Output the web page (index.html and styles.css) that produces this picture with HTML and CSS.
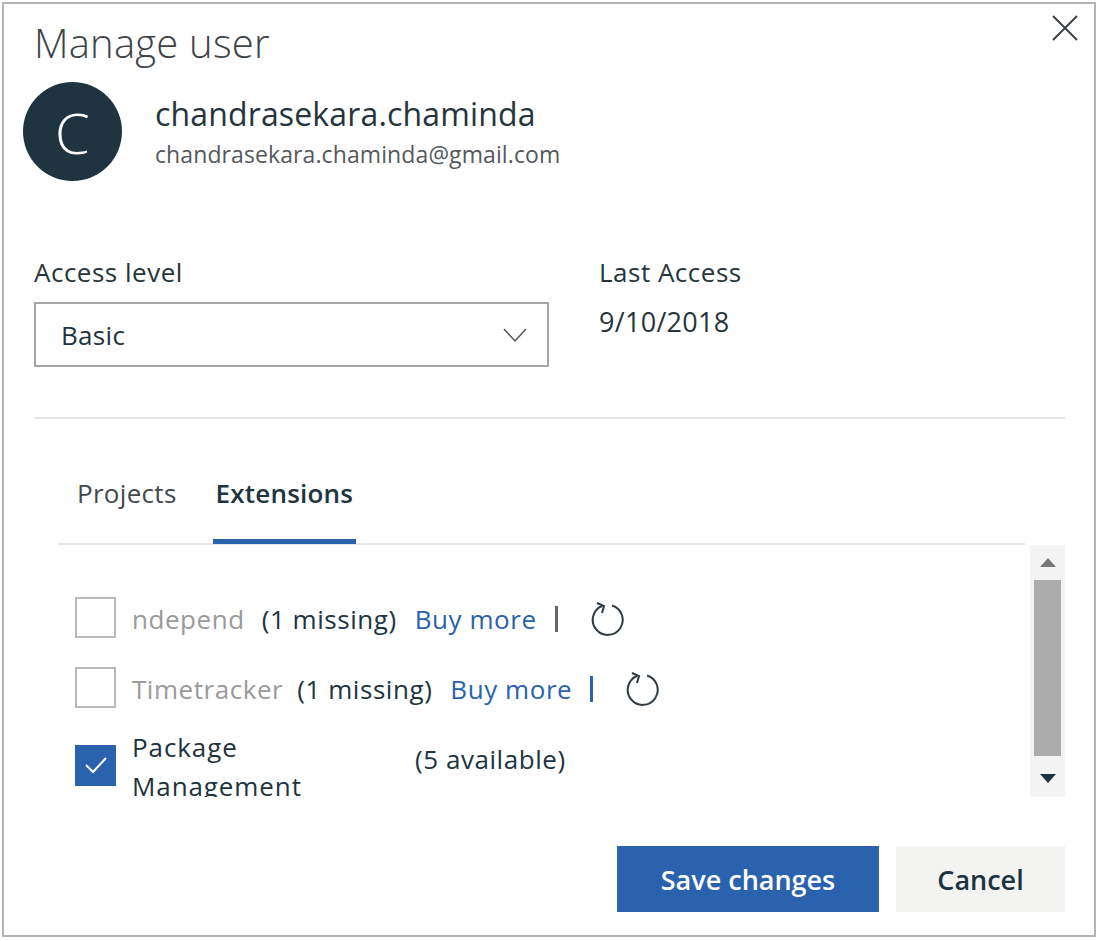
FILE: index.html
```html
<!DOCTYPE html>
<html lang="en">
<head>
  <meta charset="UTF-8" />
  <meta name="viewport" content="width=device-width, initial-scale=1" />
  <title>Manage user</title>
  <link rel="stylesheet" href="styles.css">
</head>
<body>
<div class="dialog">
  <button class="close-btn" aria-label="Close">
    <svg width="28" height="28" viewBox="0 0 28 28"><path d="M2 2 L26 26 M26 2 L2 26" stroke="#3c4348" stroke-width="2" fill="none"/></svg>
  </button>

  <h1 class="title">Manage user</h1>

  <div class="user">
    <div class="avatar">C</div>
    <div class="user-info">
      <div class="user-name">chandrasekara.chaminda</div>
      <div class="user-email">chandrasekara.chaminda@gmail.com</div>
    </div>
  </div>

  <div class="access">
    <div class="access-level">
      <label class="field-label">Access level</label>
      <div class="select">
        <span>Basic</span>
        <svg width="26" height="16" viewBox="0 0 26 16"><path d="M2 2 L13 14 L24 2" stroke="#555" stroke-width="1.5" fill="none"/></svg>
      </div>
    </div>
    <div class="last-access">
      <div class="field-label">Last Access</div>
      <div class="last-date">9/10/2018</div>
    </div>
  </div>

  <hr class="divider">

  <div class="tabs-area">
    <ul class="tabs">
      <li class="tab">Projects</li>
      <li class="tab active">Extensions</li>
    </ul>
  </div>

  <div class="list-wrap">
    <div class="list">
      <div class="row row-1">
        <span class="check"></span>
        <span class="ext-name muted">ndepend</span>
        <span class="count">(1 missing)</span>
        <a class="buy" href="#">Buy more</a>
        <span class="sep sep-gray"></span>
        <svg class="refresh" width="36" height="36" viewBox="0 0 36 36"><path d="M13 5 A15 15 0 1 0 23 4.5" stroke="#2f3b42" stroke-width="2" fill="none"/><path d="M8 2 L15 5 L13 12" stroke="#2f3b42" stroke-width="2" fill="none"/></svg>
      </div>
      <div class="row row-2">
        <span class="check"></span>
        <span class="ext-name muted">Timetracker</span>
        <span class="count">(1 missing)</span>
        <a class="buy" href="#">Buy more</a>
        <span class="sep"></span>
        <svg class="refresh" width="36" height="36" viewBox="0 0 36 36"><path d="M13 5 A15 15 0 1 0 23 4.5" stroke="#2f3b42" stroke-width="2" fill="none"/><path d="M8 2 L15 5 L13 12" stroke="#2f3b42" stroke-width="2" fill="none"/></svg>
      </div>
      <div class="row row-3">
        <span class="check checked">
          <svg width="24" height="20" viewBox="0 0 24 20"><path d="M2 10 L9 17 L22 3" stroke="#fff" stroke-width="2" fill="none"/></svg>
        </span>
        <span class="ext-name wrap">Package Management</span>
        <span class="count count-up">(5 available)</span>
      </div>
    </div>
    <div class="scrollbar">
      <span class="arrow arrow-up"></span>
      <span class="thumb"></span>
      <span class="arrow arrow-down"></span>
    </div>
  </div>

  <div class="actions">
    <button class="btn btn-primary">Save changes</button>
    <button class="btn">Cancel</button>
  </div>
</div>
</body>
</html>
```

FILE: styles.css
```css
* { margin: 0; padding: 0; box-sizing: border-box; font-family: 'Open Sans', 'Noto Sans', sans-serif; }
body { background: #fff; color: #1f333f; }
.dialog { position: relative; width: 1094px; height: 935px; margin: 2px 0 0 2px; padding: 0 29px 0 30px; border: 2px solid #b4b4b4; background: #fff; }
.close-btn { position: absolute; top: 10px; right: 15px; border: none; background: none; display: block; line-height: 0; }

.title { font-size: 40px; font-weight: 300; color: #3d4347; line-height: 50px; padding-top: 14px; letter-spacing: 0.2px; }

.user { display: flex; align-items: center; margin: 14px 0 0 -11px; }
.avatar { width: 99px; height: 99px; border-radius: 50%; background: #20343f; color: #fff; font-size: 56px; font-weight: 300; display: flex; align-items: center; justify-content: center; }
.user-info { margin-left: 33px; }
.user-name { font-size: 32px; line-height: 42px; color: #26343c; letter-spacing: 0.15px; margin-top: -1px; }
.user-email { font-size: 23px; line-height: 32px; color: #55595c; letter-spacing: 0.1px; margin-top: 3px; }

.access { display: flex; margin-top: 74px; }
.access-level { width: 515px; }
.last-access { margin-left: 50px; }
.field-label { display: block; font-size: 26px; line-height: 34px; color: #26343c; letter-spacing: 0.5px; }
.select { display: flex; align-items: center; justify-content: space-between; height: 65px; margin-top: 13px; padding: 0 19px 0 25px; border: 2px solid #a6a6a6; font-size: 26px; letter-spacing: 0.3px; }
.last-date { font-size: 27px; line-height: 34px; margin-top: 16px; color: #26343c; letter-spacing: 0.3px; }

.divider { border: none; border-top: 2px solid #e6e6e6; margin-top: 50px; }

.tabs-area { margin: 0 40px 0 24px; border-bottom: 2px solid #e6e6e6; }
.tabs { display: flex; list-style: none; padding-left: 19px; height: 124px; padding-top: 54px; }
.tab { font-size: 26px; line-height: 40px; color: #44494d; letter-spacing: 0.3px; margin-right: 39px; }
.tab.active { font-weight: 600; color: #20343f; position: relative; letter-spacing: 0.2px; }
.tab.active::after { content: ''; position: absolute; left: -3px; right: -3px; top: 66px; height: 5px; background: #2b62ad; }

.list-wrap { display: flex; margin-left: 24px; height: 252px; }
.list { flex: 1; overflow: hidden; padding: 51px 0 0 17px; margin-right: 6px; }
.row { display: flex; align-items: center; font-size: 26px; letter-spacing: 0.55px; height: 42px; margin-bottom: 28px; }
.row .ext-name, .row .count, .row .buy { padding-top: 4px; }
.check { flex: none; display: flex; align-items: center; justify-content: center; width: 41px; height: 41px; border: 2px solid #b9b9b9; margin-right: 16px; background: #fff; }
.check.checked { background: #2b62ad; border-color: #2b62ad; }
.ext-name { margin-right: 17px; }
.ext-name.muted { color: #9a9a9a; }
.row .ext-name.wrap { width: 283px; line-height: 39px; margin-right: 0; flex: none; padding-right: 100px; letter-spacing: 0.9px; }
.row-2 { margin-bottom: 17px; }
.row-2 .ext-name { margin-right: 14px; }
.row-3 { height: 80px; margin: 0; }
.count { color: #20343f; margin-right: 18px; }
.count-up { margin-bottom: 16px; }
.buy { color: #2b62ad; text-decoration: none; margin-right: 18px; }
.sep { width: 3px; height: 26px; background: #2b62ad; margin: 4px 31px 0 0; }
.sep-gray { background: #6b6666; }
.refresh { margin-top: 4px; }

.scrollbar { flex: none; width: 35px; display: flex; flex-direction: column; align-items: center; background: #f4f4f4; padding: 0 4px; }
.thumb { width: 27px; height: 176px; background: #acacac; }
.arrow { width: 0; height: 0; border-left: 8px solid transparent; border-right: 8px solid transparent; }
.arrow-up { border-bottom: 9px solid #777; margin: 13px 0 13px; }
.arrow-down { border-top: 9px solid #20343f; margin: 18px 0 0; }

.actions { display: flex; justify-content: flex-end; gap: 17px; margin-top: 49px; }
.btn { height: 66px; width: 169px; border: none; background: #f3f3f2; color: #20343f; font-size: 27px; font-weight: 600; }
.btn-primary { width: 262px; background: #2b62ad; color: #fff; }
```
